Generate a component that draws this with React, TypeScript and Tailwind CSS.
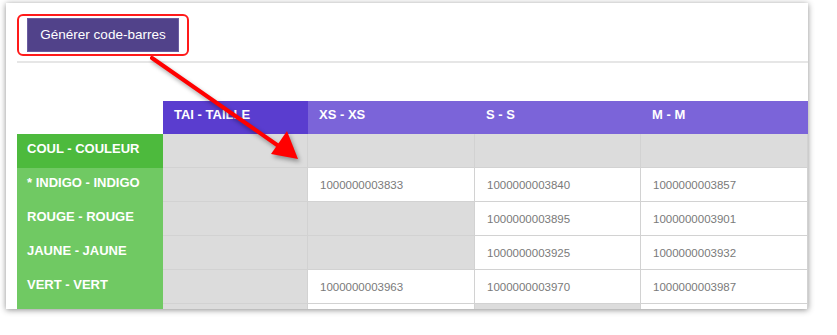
import React from 'react';

type Cell = { kind: 'gray' | 'white'; value?: string };

const headers = [
  { label: 'TAI - TAILLE', dark: true },
  { label: 'XS - XS', dark: false },
  { label: 'S - S', dark: false },
  { label: 'M - M', dark: false },
];

const rows: { label: string; head?: boolean; cells: Cell[] }[] = [
  {
    label: 'COUL - COULEUR',
    head: true,
    cells: [{ kind: 'gray' }, { kind: 'gray' }, { kind: 'gray' }, { kind: 'gray' }],
  },
  {
    label: '* INDIGO - INDIGO',
    cells: [
      { kind: 'gray' },
      { kind: 'white', value: '1000000003833' },
      { kind: 'white', value: '1000000003840' },
      { kind: 'white', value: '1000000003857' },
    ],
  },
  {
    label: 'ROUGE - ROUGE',
    cells: [
      { kind: 'gray' },
      { kind: 'gray' },
      { kind: 'white', value: '1000000003895' },
      { kind: 'white', value: '1000000003901' },
    ],
  },
  {
    label: 'JAUNE - JAUNE',
    cells: [
      { kind: 'gray' },
      { kind: 'gray' },
      { kind: 'white', value: '1000000003925' },
      { kind: 'white', value: '1000000003932' },
    ],
  },
  {
    label: 'VERT - VERT',
    cells: [
      { kind: 'gray' },
      { kind: 'white', value: '1000000003963' },
      { kind: 'white', value: '1000000003970' },
      { kind: 'white', value: '1000000003987' },
    ],
  },
  {
    label: '',
    cells: [{ kind: 'gray' }, { kind: 'white' }, { kind: 'gray' }, { kind: 'white' }],
  },
];

function Arrow() {
  return (
    <svg
      className="absolute left-0 top-0 pointer-events-none"
      width="837"
      height="335"
      viewBox="0 0 837 335"
      style={{ filter: 'drop-shadow(2px 3px 2px rgba(0,0,0,0.35))' }}
    >
      <line x1="152" y1="58" x2="280" y2="147" stroke="#ff0000" strokeWidth="4" strokeLinecap="round" />
      <polygon points="298,159 271,154 287,131" fill="#ff0000" />
    </svg>
  );
}

export default function App(): React.ReactElement {
  return (
    <div className="relative w-[837px] h-[335px] bg-white overflow-hidden" style={{ fontFamily: '"Liberation Sans", Arial, sans-serif' }}>
      <div className="ml-[6px] mt-[3px] w-[802px] h-[306px] bg-white overflow-hidden shadow-[0_1px_6px_rgba(0,0,0,0.45)]">
        {/* Toolbar */}
        <div className="pl-[11px] pt-[11px]">
          <div className="inline-flex px-[8px] py-[2px] border-2 border-[#ff1a1a] rounded-[6px]">
            <button className="h-[34px] w-[152px] bg-[#51428a] border border-[#6a5ca0] text-white text-[13.5px]">
              Générer code-barres
            </button>
          </div>
        </div>
        <div className="ml-[11px] mt-[5px] h-[2px] bg-[#e6e6e6]" />

        {/* Table */}
        <div className="ml-[11px] mt-[38px] grid grid-cols-[146px_145px_167px_166px_167px]">
          <div className="h-[33px] bg-white" />
          {headers.map((h) => (
            <div
              key={h.label}
              className={`h-[33px] flex items-center pl-[11px] pb-[6px] text-white font-bold text-[13px] ${
                h.dark ? 'bg-[#5a3dcf]' : 'bg-[#7b64d9]'
              }`}
            >
              {h.label}
            </div>
          ))}

          {rows.map((r, ri) => (
            <React.Fragment key={ri}>
              <div
                className={`h-[34px] flex items-center pl-[10px] pb-[5px] text-white font-bold text-[13px] ${
                  r.head ? 'bg-[#4dba3d]' : 'bg-[#70c963]'
                }`}
              >
                {r.label}
              </div>
              {r.cells.map((c, i) => (
                <div
                  key={i}
                  className={`h-[34px] flex items-center pl-[12px] pt-[2px] border-r border-b border-[#d2d2d2] text-[11.5px] text-[#7a7a7a] ${
                    c.kind === 'gray' ? 'bg-[#dcdcdc]' : 'bg-white'
                  }`}
                >
                  {c.value}
                </div>
              ))}
            </React.Fragment>
          ))}
        </div>
      </div>
      <Arrow />
    </div>
  );
}
